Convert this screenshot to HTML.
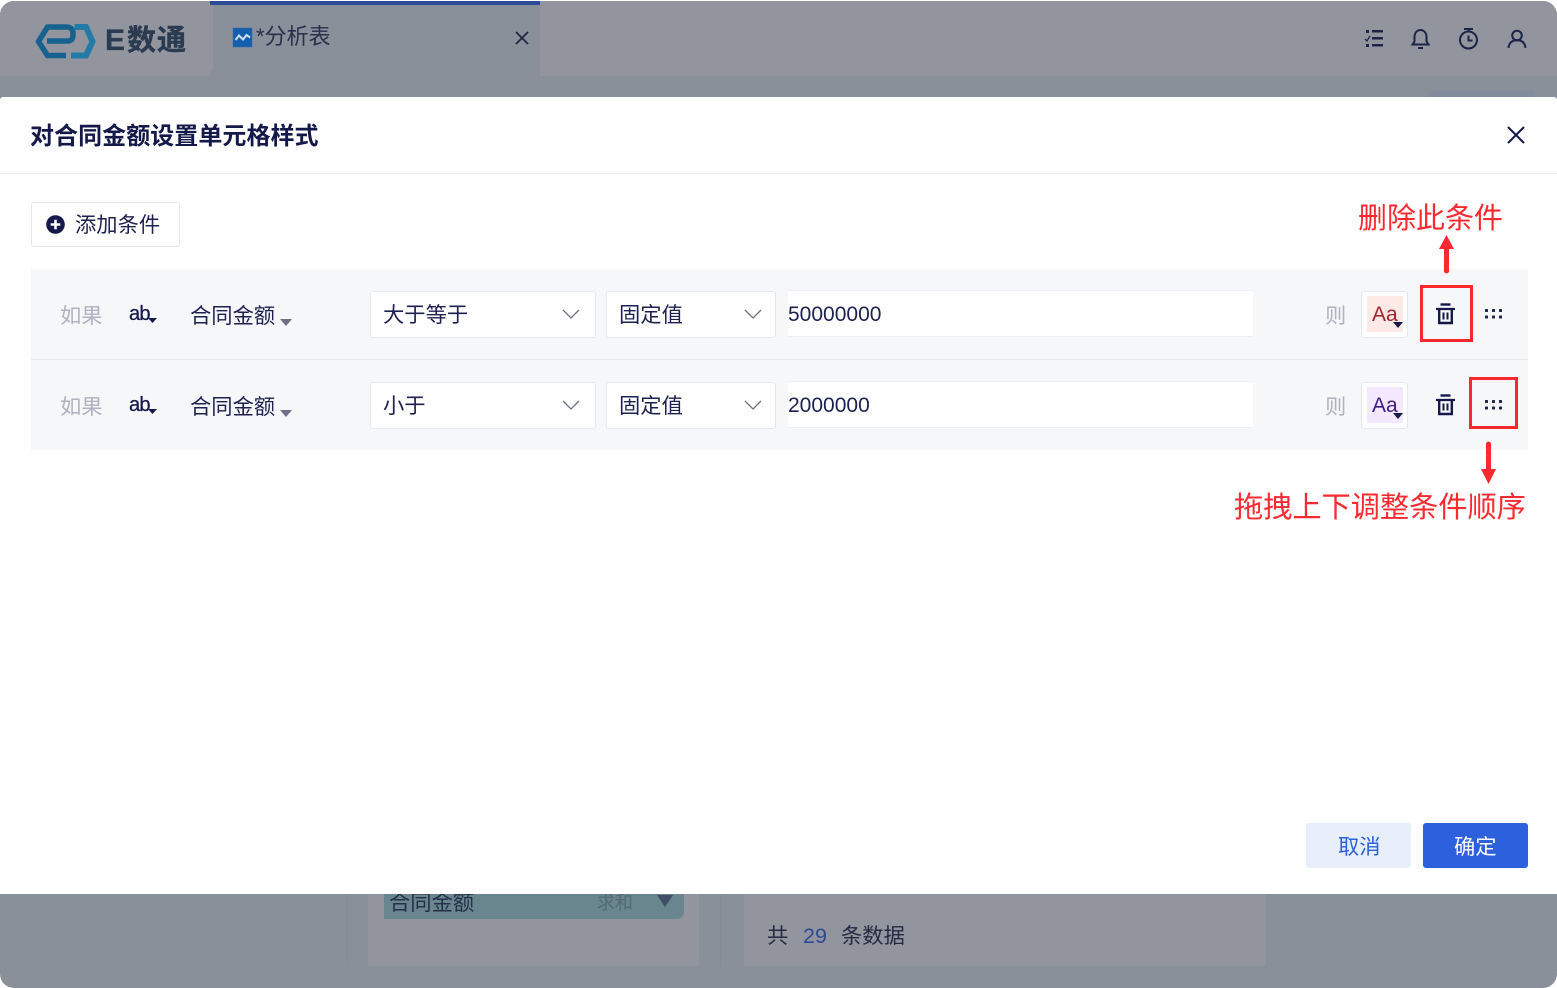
<!DOCTYPE html>
<html lang="zh">
<head>
<meta charset="utf-8">
<style>
html,body{margin:0;padding:0;background:#fff}
body{width:1557px;height:988px;position:relative;overflow:hidden;font-family:"Liberation Sans","Noto Sans CJK SC",sans-serif;color:#14194a}
div,span{position:absolute;box-sizing:border-box;white-space:nowrap}
svg{position:absolute;overflow:visible}
.t{font-size:21.3px;line-height:30px;color:#1c2150}
.n{font-size:21px;line-height:30px;color:#1c2150}
.g{font-size:21.3px;line-height:30px;color:#afb2c1}
.sel{background:#fff;border:1px solid #e8e9ee;border-radius:3px;height:47px;top:0}
.red{color:#fa2a30;font-size:29px;line-height:36px}
.box{border:3px solid #fb272e}
</style>
</head>
<body>
<div id="app" style="left:0;top:1px;width:1557px;height:987px;background:#8a9099;border-radius:14px;overflow:hidden">
  <div style="left:0;top:0;width:210px;height:75px;background:#92959d"></div>
  <div style="left:210px;top:0;width:3px;height:70px;background:#92959d"></div>
  <div style="left:540px;top:0;width:1017px;height:75px;background:#92959d"></div>
  <div style="left:210px;top:0;width:330px;height:4px;background:#2d4a95"></div>
  <div style="left:1428px;top:90px;width:107px;height:10px;background:#838c9e;border-radius:3px"></div>

  <svg style="left:0;top:-1px" width="110" height="70" viewBox="0 0 110 70" fill="none">
    <path d="M66 55.500H47.500L38.500 41.500L47.500 27H66Q73 27 73 33.500V35Q73 41 67.500 41H47" stroke="#15628f" stroke-width="5.500"/>
    <path d="M74.500 27H86L92.500 41.500L86 55.500H71" stroke="#217ba5" stroke-width="6"/>
  </svg>
  <span style="left:105px;top:22px;font-size:30px;line-height:36px;font-weight:700;color:#2a3a50;-webkit-text-stroke:.3px #2a3a50">E</span>
  <span style="left:127px;top:22px;font-size:29px;line-height:36px;font-weight:700;color:#2a3a50;letter-spacing:1px;-webkit-text-stroke:.4px #2a3a50">数通</span>

  <svg style="left:233px;top:27px" width="19" height="19" viewBox="0 0 19 19">
    <rect width="19" height="19" fill="#1560ae" stroke="#3a6aa8" stroke-width=".5"/>
    <path d="M2.500 12L6 7.500L10 11.500L13.500 7L17 9.500" fill="none" stroke="#cfe0f0" stroke-width="2"/>
  </svg>
  <span style="left:256px;top:21px;font-size:22px;line-height:30px;color:#28304a">*分析表</span>
  <svg style="left:515px;top:30px" width="14" height="14" viewBox="0 0 14 14"><path d="M1 1L13 13M13 1L1 13" stroke="#1c2744" stroke-width="1.800"/></svg>

  <!-- header icons -->
  <svg style="left:1364px;top:27px" width="21" height="21" viewBox="0 0 21 21" fill="#1c2548">
    <rect x="2" y="2" width="3" height="3"/><rect x="8" y="2" width="11" height="2.500"/>
    <path d="M1 11L3 13L6 8" fill="none" stroke="#1c2548" stroke-width="1.300"/>
    <rect x="8" y="9" width="11" height="2.500"/>
    <rect x="2" y="16" width="3" height="3"/><rect x="8" y="16" width="11" height="2.500"/>
  </svg>
  <svg style="left:1410px;top:27px" width="21" height="21" viewBox="0 0 21 21" fill="none" stroke="#1c2548" stroke-width="2">
    <path d="M2.500 16.500H18.500L16.500 13.500V9C16.500 5 14 2 10.500 2C7 2 4.500 5 4.500 9V13.500Z"/>
    <path d="M8 20H13"/>
  </svg>
  <svg style="left:1458px;top:26px" width="21" height="23" viewBox="0 0 21 23" fill="none" stroke="#1c2548" stroke-width="2">
    <path d="M6 2H15M10.500 2V5"/>
    <circle cx="10.500" cy="13" r="8.500"/>
    <path d="M10.500 8.500V13.500H14.500"/>
  </svg>
  <svg style="left:1507px;top:28px" width="20" height="20" viewBox="0 0 20 20" fill="none" stroke="#1c2548" stroke-width="2">
    <circle cx="10" cy="6.500" r="4.800"/>
    <path d="M1.500 19C2 14 5 11.300 10 11.300C15 11.300 18 14 18.500 19"/>
  </svg>

  <!-- background bottom -->
  <div style="left:347px;top:879px;width:1px;height:86px;background:#858b94"></div>
  <div style="left:368px;top:879px;width:331px;height:86px;background:#92959d"></div>
  <div style="left:384px;top:879px;width:300px;height:39px;background:#69858d;border-radius:0 0 7px 0"></div>
  <span style="left:389px;top:887px;font-size:21.3px;line-height:30px;color:#252f4a">合同金额</span>
  <span style="left:597px;top:887px;font-size:18px;line-height:30px;color:#526a75">求和</span>
  <svg style="left:657px;top:894px" width="16" height="12"><path d="M0 0H16L8 12Z" fill="#3e4f66"/></svg>
  <div style="left:720px;top:879px;width:1px;height:86px;background:#858b94"></div>
  <div style="left:744px;top:879px;width:522px;height:86px;background:#92959d"></div>
  <span style="left:767px;top:920px;font-size:21.3px;line-height:30px;color:#252a44">共</span>
  <span style="left:803px;top:920px;font-size:21.5px;line-height:30px;color:#2d4a95">29</span>
  <span style="left:841px;top:920px;font-size:21.3px;line-height:30px;color:#252a44">条数据</span>
</div>

<!-- modal -->
<div style="left:0;top:97px;width:1557px;height:797px;background:#fff;border-radius:3px 3px 0 0">
  <div style="left:0;top:76px;width:1557px;height:1px;background:#ebecf0"></div>
  <span style="left:30px;top:22px;font-size:24px;line-height:36px;font-weight:700;color:#14194a;letter-spacing:.05px">对合同金额设置单元格样式</span>
  <svg style="left:1507px;top:29px" width="18" height="18" viewBox="0 0 18 18"><path d="M1 1L17 17M17 1L1 17" stroke="#14194a" stroke-width="2"/></svg>
</div>

<div style="left:31px;top:202px;width:149px;height:45px;background:#fff;border:1px solid #e6e7ec;border-radius:3px"></div>
<svg style="left:46px;top:215px" width="19" height="19" viewBox="0 0 19 19"><circle cx="9.500" cy="9.500" r="9.300" fill="#14194a"/><path d="M4.700 9.500H14.300M9.500 4.700V14.300" stroke="#fff" stroke-width="2.600"/></svg>
<span class="t" style="left:75px;top:210px">添加条件</span>

<!-- row backgrounds -->
<div style="left:31px;top:269px;width:1497px;height:181px;background:#f6f7f9"></div>
<div style="left:31px;top:359px;width:1497px;height:1px;background:#e8e9ee"></div>

<!-- row 1 -->
<span class="g" style="left:60px;top:301px">如果</span>
<span style="left:129px;top:300px;font-size:20px;line-height:28px;color:#14194a;letter-spacing:-.8px;-webkit-text-stroke:.3px #14194a">ab</span>
<svg style="left:148px;top:318px" width="9" height="5"><path d="M0 0H9L4.500 5Z" fill="#14194a"/></svg>
<span class="t" style="left:190px;top:301px">合同金额</span>
<svg style="left:280px;top:319px" width="12" height="7"><path d="M0 0H12L6 7Z" fill="#6d7087"/></svg>

<div class="sel" style="left:370px;top:291px;width:226px"></div>
<span class="t" style="left:383px;top:300px">大于等于</span>
<svg style="left:562px;top:309px" width="18" height="11" fill="none"><path d="M1 1L9 9L17 1" stroke="#6d7087" stroke-width="1.300"/></svg>
<div class="sel" style="left:606px;top:291px;width:170px"></div>
<span class="t" style="left:619px;top:300px">固定值</span>
<svg style="left:744px;top:309px" width="18" height="11" fill="none"><path d="M1 1L9 9L17 1" stroke="#6d7087" stroke-width="1.300"/></svg>
<div style="left:788px;top:290px;width:465px;height:47px;background:#fff;border-top:1px solid #eeeff2;border-bottom:1px solid #eeeff2"></div>
<span class="n" style="left:788px;top:300px">50000000</span>

<span class="g" style="left:1325px;top:301px">则</span>
<div style="left:1361px;top:291px;width:47px;height:47px;background:#fff;border:1px solid #e8e9ee;border-radius:3px"></div>
<div style="left:1367px;top:296px;width:36px;height:36px;background:#fde9e6"></div>
<span style="left:1372px;top:301px;font-size:21px;line-height:28px;color:#a5262f">Aa</span>
<svg style="left:1393px;top:322px" width="10" height="6"><path d="M0 0H10L5 6Z" fill="#14194a"/></svg>

<svg style="left:1436px;top:303px" width="19" height="21" viewBox="0 0 19 21" fill="none" stroke="#14194a" stroke-width="2.400">
  <path d="M4.500 1.500H14.500" /><path d="M0 6H19" stroke-width="2.200"/><path d="M3.200 6V20H15.800V6"/><path d="M7.500 9.500V16.500M11.500 9.500V16.500" stroke-width="2"/>
</svg>
<svg style="left:1485px;top:309px" width="18" height="10" fill="#1f2452">
  <rect width="3" height="3" x="0" y="0" rx=".6"/><rect width="3" height="3" x="7" y="0" rx=".6"/><rect width="3" height="3" x="14" y="0" rx=".6"/>
  <rect width="3" height="3" x="0" y="6.500" rx=".6"/><rect width="3" height="3" x="7" y="6.500" rx=".6"/><rect width="3" height="3" x="14" y="6.500" rx=".6"/>
</svg>

<!-- row 2 -->
<span class="g" style="left:60px;top:392px">如果</span>
<span style="left:129px;top:391px;font-size:20px;line-height:28px;color:#14194a;letter-spacing:-.8px;-webkit-text-stroke:.3px #14194a">ab</span>
<svg style="left:148px;top:409px" width="9" height="5"><path d="M0 0H9L4.500 5Z" fill="#14194a"/></svg>
<span class="t" style="left:190px;top:392px">合同金额</span>
<svg style="left:280px;top:410px" width="12" height="7"><path d="M0 0H12L6 7Z" fill="#6d7087"/></svg>

<div class="sel" style="left:370px;top:382px;width:226px"></div>
<span class="t" style="left:383px;top:391px">小于</span>
<svg style="left:562px;top:400px" width="18" height="11" fill="none"><path d="M1 1L9 9L17 1" stroke="#6d7087" stroke-width="1.300"/></svg>
<div class="sel" style="left:606px;top:382px;width:170px"></div>
<span class="t" style="left:619px;top:391px">固定值</span>
<svg style="left:744px;top:400px" width="18" height="11" fill="none"><path d="M1 1L9 9L17 1" stroke="#6d7087" stroke-width="1.300"/></svg>
<div style="left:788px;top:381px;width:465px;height:47px;background:#fff;border-top:1px solid #eeeff2;border-bottom:1px solid #eeeff2"></div>
<span class="n" style="left:788px;top:391px">2000000</span>

<span class="g" style="left:1325px;top:392px">则</span>
<div style="left:1361px;top:382px;width:47px;height:47px;background:#fff;border:1px solid #e8e9ee;border-radius:3px"></div>
<div style="left:1367px;top:387px;width:36px;height:36px;background:#f3e8fd"></div>
<span style="left:1372px;top:392px;font-size:21px;line-height:28px;color:#3d1d84">Aa</span>
<svg style="left:1393px;top:413px" width="10" height="6"><path d="M0 0H10L5 6Z" fill="#14194a"/></svg>

<svg style="left:1436px;top:394px" width="19" height="21" viewBox="0 0 19 21" fill="none" stroke="#14194a" stroke-width="2.400">
  <path d="M4.500 1.500H14.500" /><path d="M0 6H19" stroke-width="2.200"/><path d="M3.200 6V20H15.800V6"/><path d="M7.500 9.500V16.500M11.500 9.500V16.500" stroke-width="2"/>
</svg>
<svg style="left:1485px;top:400px" width="18" height="10" fill="#1f2452">
  <rect width="3" height="3" x="0" y="0" rx=".6"/><rect width="3" height="3" x="7" y="0" rx=".6"/><rect width="3" height="3" x="14" y="0" rx=".6"/>
  <rect width="3" height="3" x="0" y="6.500" rx=".6"/><rect width="3" height="3" x="7" y="6.500" rx=".6"/><rect width="3" height="3" x="14" y="6.500" rx=".6"/>
</svg>

<!-- annotations -->
<div class="box" style="left:1420px;top:285px;width:53px;height:57px"></div>
<div class="box" style="left:1469px;top:377px;width:49px;height:52px"></div>
<span class="red" style="left:1358px;top:201px">删除此条件</span>
<svg style="left:1439px;top:235px" width="15" height="40"><path d="M7.500 0L15 14H10V37Q7.500 40 5 37V14H0Z" fill="#fa2a30"/></svg>
<svg style="left:1481px;top:441px" width="15" height="44"><path d="M5 2Q7.500 -1 10 2V28H15L7.500 43L0 28H5Z" fill="#fa2a30"/></svg>
<span class="red" style="left:1234px;top:490px;font-size:29.2px">拖拽上下调整条件顺序</span>

<!-- buttons -->
<div style="left:1306px;top:823px;width:105px;height:45px;background:#e9eefb;border-radius:3px"></div>
<span style="left:1338px;top:832px;font-size:21.3px;line-height:30px;color:#2c60dd">取消</span>
<div style="left:1423px;top:823px;width:105px;height:45px;background:#2c60dd;border-radius:3px"></div>
<span style="left:1454px;top:832px;font-size:21.3px;line-height:30px;color:#fff">确定</span>
</body>
</html>
